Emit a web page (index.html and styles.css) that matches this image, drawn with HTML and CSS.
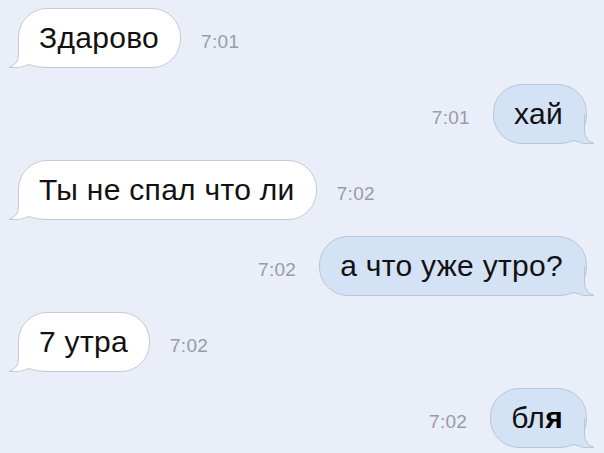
FILE: index.html
```html
<!DOCTYPE html>
<html lang="ru">
<head>
    <meta charset="UTF-8">
    <meta name="viewport" content="width=device-width, initial-scale=1.0">
    <title>Сообщения</title>
    <link rel="stylesheet" href="styles.css">
</head>
<body>
    <div class="chat">
        <!-- входящее -->
        <div class="fila">
            <div class="burbuja recibido">
                <span class="texto">Здарово</span>
                <svg class="cola" width="38" height="30" viewBox="0 0 38 30">
                    <path class="cola_fondo" d="M10.5 0 L10.5 17 Q10.5 26 1 29.5 Q12 31 21 26.5 Q28 29.5 38 29.5 L38 0 Z"/>
                    <path class="cola_borde" d="M10.5 0 L10.5 17 Q10.5 26 1 29.5 Q12 31 21 26.5 Q28 29.5 38 29.5"/>
                </svg>
            </div>
            <span class="hora">7:01</span>
        </div>

        <div class="fila derecha">
            <span class="hora">7:01</span>
            <div class="burbuja enviado">
                <span class="texto">хай</span>
                <svg class="cola" width="38" height="30" viewBox="0 0 38 30">
                    <path class="cola_fondo" d="M10.5 0 L10.5 17 Q10.5 26 1 29.5 Q12 31 21 26.5 Q28 29.5 38 29.5 L38 0 Z"/>
                    <path class="cola_borde" d="M10.5 0 L10.5 17 Q10.5 26 1 29.5 Q12 31 21 26.5 Q28 29.5 38 29.5"/>
                </svg>
            </div>
        </div>

        <div class="fila">
            <div class="burbuja recibido">
                <span class="texto">Ты не спал что ли</span>
                <svg class="cola" width="38" height="30" viewBox="0 0 38 30">
                    <path class="cola_fondo" d="M10.5 0 L10.5 17 Q10.5 26 1 29.5 Q12 31 21 26.5 Q28 29.5 38 29.5 L38 0 Z"/>
                    <path class="cola_borde" d="M10.5 0 L10.5 17 Q10.5 26 1 29.5 Q12 31 21 26.5 Q28 29.5 38 29.5"/>
                </svg>
            </div>
            <span class="hora">7:02</span>
        </div>

        <div class="fila derecha">
            <span class="hora">7:02</span>
            <div class="burbuja enviado">
                <span class="texto">а что уже утро?</span>
                <svg class="cola" width="38" height="30" viewBox="0 0 38 30">
                    <path class="cola_fondo" d="M10.5 0 L10.5 17 Q10.5 26 1 29.5 Q12 31 21 26.5 Q28 29.5 38 29.5 L38 0 Z"/>
                    <path class="cola_borde" d="M10.5 0 L10.5 17 Q10.5 26 1 29.5 Q12 31 21 26.5 Q28 29.5 38 29.5"/>
                </svg>
            </div>
        </div>

        <div class="fila">
            <div class="burbuja recibido">
                <span class="texto">7 утра</span>
                <svg class="cola" width="38" height="30" viewBox="0 0 38 30">
                    <path class="cola_fondo" d="M10.5 0 L10.5 17 Q10.5 26 1 29.5 Q12 31 21 26.5 Q28 29.5 38 29.5 L38 0 Z"/>
                    <path class="cola_borde" d="M10.5 0 L10.5 17 Q10.5 26 1 29.5 Q12 31 21 26.5 Q28 29.5 38 29.5"/>
                </svg>
            </div>
            <span class="hora">7:02</span>
        </div>

        <div class="fila derecha">
            <span class="hora">7:02</span>
            <div class="burbuja enviado">
                <span class="texto">бл<span class="tapado">я</span></span>
                <svg class="cola" width="38" height="30" viewBox="0 0 38 30">
                    <path class="cola_fondo" d="M10.5 0 L10.5 17 Q10.5 26 1 29.5 Q12 31 21 26.5 Q28 29.5 38 29.5 L38 0 Z"/>
                    <path class="cola_borde" d="M10.5 0 L10.5 17 Q10.5 26 1 29.5 Q12 31 21 26.5 Q28 29.5 38 29.5"/>
                </svg>
            </div>
        </div>
    </div>
</body>
</html>
```

FILE: styles.css
```css
html, body {
    margin: 0;
    padding: 0;
    width: 100%;
    height: 100%;
    background-color: #e9eef8;
}

.chat {
    display: flex;
    flex-direction: column;
    gap: 16px;
    padding: 8px 17px 0 18px;
    font-family: "Liberation Sans", Arial, sans-serif;
}

.fila {
    display: flex;
    align-items: baseline;
    gap: 20px;
}

.derecha {
    justify-content: flex-end;
    gap: 23px;
}

.burbuja {
    position: relative;
    font-size: 30px;
    letter-spacing: 0.3px;
    line-height: 58px;
    padding: 0 21px 0 20px;
    border-radius: 29px;
    border: 1px solid #c6cad2;
    color: #111;
    white-space: nowrap;
}

.texto {
    position: relative;
    z-index: 1;
}

.recibido {
    background-color: #fff;
}

.enviado {
    background-color: #d4e2f6;
    border-color: #b8c5da;
    padding: 0 23px 0 20px;
}

.hora {
    font-size: 19px;
    letter-spacing: 0.3px;
    color: #989ca5;
}

.cola {
    position: absolute;
    left: -11px;
    bottom: -1px;
    z-index: 0;
}

.enviado .cola {
    left: auto;
    right: -9px;
    transform: scaleX(-1);
}

.cola_fondo {
    fill: #fff;
}

.cola_borde {
    fill: none;
    stroke: #c6cad2;
    stroke-width: 1;
}

.enviado .cola_fondo {
    fill: #d4e2f6;
}

.enviado .cola_borde {
    stroke: #b8c5da;
}

.tapado {
    font-weight: bold;
    color: #000;
}
```
